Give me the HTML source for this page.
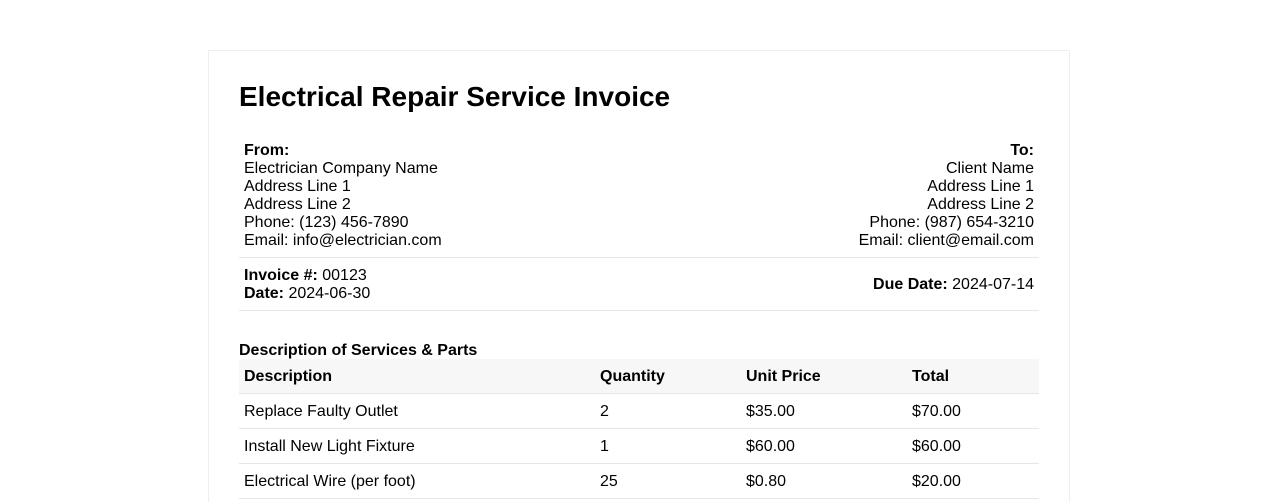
<!DOCTYPE html>
<html><head><style>
html,body{margin:0;height:501px;overflow:hidden;}
body{background:#fff;font-family:"Liberation Sans",Arial,sans-serif;color:#000;font-size:16px;line-height:18px;}
.card{position:absolute;left:208px;top:50px;width:860px;height:451px;border:1px solid #eee;border-bottom:none;}
.a{position:absolute;}
h1{position:absolute;left:239px;top:80px;margin:0;font-size:28px;line-height:34px;font-weight:bold;}
.hr{position:absolute;left:239px;width:800px;height:1px;background:#e8e8e8;}
table{position:absolute;left:239px;top:359px;width:800px;border-collapse:collapse;}
td,th{padding:1px 5px 0;height:33px;text-align:left;border-bottom:1px solid #e6e6e6;vertical-align:middle;}
th{background:#f7f7f7;font-weight:bold;}
</style></head><body>
<div class="card"></div>
<h1>Electrical Repair Service Invoice</h1>
<div class="a" style="left:244px;top:142px;"><b>From:</b><br>Electrician Company Name<br>Address Line 1<br>Address Line 2<br>Phone: (123) 456-7890<br>Email: info@electrician.com</div>
<div class="a" style="right:244px;top:142px;text-align:right;"><b>To:</b><br>Client Name<br>Address Line 1<br>Address Line 2<br>Phone: (987) 654-3210<br>Email: client@email.com</div>
<div class="hr" style="top:257px"></div>
<div class="a" style="left:244px;top:267px;"><b>Invoice #:</b> 00123<br><b>Date:</b> 2024-06-30</div>
<div class="a" style="right:244px;top:276px;text-align:right;"><b>Due Date:</b> 2024-07-14</div>
<div class="hr" style="top:310px"></div>
<div class="a" style="left:239px;top:342px;font-weight:bold;">Description of Services &amp; Parts</div>
<table>
<tr><th style="width:346px">Description</th><th style="width:136px">Quantity</th><th style="width:156px">Unit Price</th><th>Total</th></tr>
<tr><td>Replace Faulty Outlet</td><td>2</td><td>$35.00</td><td>$70.00</td></tr>
<tr><td>Install New Light Fixture</td><td>1</td><td>$60.00</td><td>$60.00</td></tr>
<tr><td>Electrical Wire (per foot)</td><td>25</td><td>$0.80</td><td>$20.00</td></tr>
</table>
</body></html>
